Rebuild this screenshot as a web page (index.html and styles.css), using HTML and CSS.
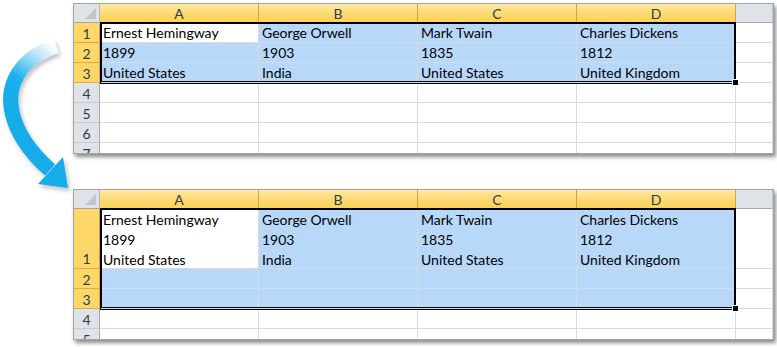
FILE: index.html
```html
<!DOCTYPE html>
<html>
<head>
<meta charset="utf-8">
<link rel="stylesheet" href="styles.css">
</head>
<body>
<div class="page">
  <svg class="arrow" width="80" height="200" viewBox="0 0 80 200" aria-hidden="true">
    <defs>
      <linearGradient id="shaft" gradientUnits="userSpaceOnUse" x1="52" y1="44" x2="14" y2="100">
        <stop offset="0" stop-color="#ffffff"/>
        <stop offset="0.25" stop-color="#bfe6f8"/>
        <stop offset="0.7" stop-color="#1cb0ec"/>
        <stop offset="1" stop-color="#14abe9"/>
      </linearGradient>
      <filter id="sh" x="-30%" y="-30%" width="160%" height="160%">
        <feDropShadow dx="2" dy="3" stdDeviation="2" flood-color="#000" flood-opacity="0.25"/>
      </filter>
    </defs>
    <g filter="url(#sh)">
      <path d="M56 46 C 20 58, 6 85, 12 112 C 17 135, 32 154, 50 170" fill="none" stroke="url(#shaft)" stroke-width="15"/>
      <polygon points="38,184 63,157 68,188" fill="#14abe9"/>
    </g>
  </svg>

  <div class="sheet sheet-top">
    <div class="grid">
      <div class="corner"><span class="tri"></span></div>
      <div class="ch sel">A</div>
      <div class="ch sel">B</div>
      <div class="ch sel">C</div>
      <div class="ch sel last">D</div>
      <div class="ch"></div>

      <div class="rh sel">1</div>
      <div class="c">Ernest Hemingway</div>
      <div class="c b">George Orwell</div>
      <div class="c b">Mark Twain</div>
      <div class="c b">Charles Dickens</div>
      <div class="c"></div>

      <div class="rh sel">2</div>
      <div class="c b">1899</div>
      <div class="c b">1903</div>
      <div class="c b">1835</div>
      <div class="c b">1812</div>
      <div class="c"></div>

      <div class="rh sel">3</div>
      <div class="c b">United States</div>
      <div class="c b">India</div>
      <div class="c b">United States</div>
      <div class="c b">United Kingdom</div>
      <div class="c"></div>

      <div class="rh">4</div><div class="c"></div><div class="c"></div><div class="c"></div><div class="c"></div><div class="c"></div>
      <div class="rh">5</div><div class="c"></div><div class="c"></div><div class="c"></div><div class="c"></div><div class="c"></div>
      <div class="rh">6</div><div class="c"></div><div class="c"></div><div class="c"></div><div class="c"></div><div class="c"></div>
      <div class="rh">7</div><div class="c"></div><div class="c"></div><div class="c"></div><div class="c"></div><div class="c"></div>
    </div>
    <div class="selection sel-top"><span class="handle"></span></div>
  </div>

  <div class="sheet sheet-bottom">
    <div class="grid">
      <div class="corner"><span class="tri"></span></div>
      <div class="ch sel">A</div>
      <div class="ch sel">B</div>
      <div class="ch sel">C</div>
      <div class="ch sel last">D</div>
      <div class="ch"></div>

      <div class="rh sel tall">1</div>
      <div class="c tall">Ernest Hemingway<br>1899<br>United States</div>
      <div class="c b tall">George Orwell<br>1903<br>India</div>
      <div class="c b tall">Mark Twain<br>1835<br>United States</div>
      <div class="c b tall">Charles Dickens<br>1812<br>United Kingdom</div>
      <div class="c tall"></div>

      <div class="rh sel">2</div>
      <div class="c b"></div><div class="c b"></div><div class="c b"></div><div class="c b"></div><div class="c"></div>

      <div class="rh sel">3</div>
      <div class="c b"></div><div class="c b"></div><div class="c b"></div><div class="c b"></div><div class="c"></div>

      <div class="rh">4</div><div class="c"></div><div class="c"></div><div class="c"></div><div class="c"></div><div class="c"></div>
      <div class="rh">5</div><div class="c"></div><div class="c"></div><div class="c"></div><div class="c"></div><div class="c"></div>
    </div>
    <div class="selection sel-bottom"><span class="handle"></span></div>
  </div>
</div>
</body>
</html>
```

FILE: styles.css
```css
* { box-sizing: border-box; }
html, body { margin: 0; padding: 0; background: #ffffff; }
body {
  width: 777px;
  height: 347px;
  overflow: hidden;
  font-family: Lato, "Liberation Sans", sans-serif;
}
.page {
  position: relative;
  padding: 3px 0 0 73px;
  display: flex;
  flex-direction: column;
  gap: 35px;
}
.arrow {
  position: absolute;
  left: 0;
  top: 0;
  z-index: 3;
}
.sheet {
  position: relative;
  width: 701px;
  border: 1px solid #a3a3a3;
  background: #fff;
  overflow: hidden;
  box-shadow: 2px 3px 4px rgba(0, 0, 0, 0.45);
}
.sheet-top { height: 151px; }
.sheet-bottom { height: 151px; }
.grid {
  display: grid;
  grid-template-columns: 26px 159px 159px 159px 159px 1fr;
  grid-auto-rows: 20px;
  grid-template-rows: 19px;
  font-size: 14px;
  color: #000;
}
.corner {
  position: relative;
  background: #dfe3e8;
  border-right: 1px solid #b3b8bf;
  border-bottom: 1px solid #a3a8ae;
}
.tri {
  position: absolute;
  right: 3px;
  bottom: 3px;
  width: 0;
  height: 0;
  border-left: 11px solid transparent;
  border-bottom: 11px solid #c2c6cc;
}
.ch {
  background: #dfe3e8;
  border-right: 1px solid #c3c7cd;
  border-bottom: 1px solid #a3a8ae;
  display: flex;
  align-items: center;
  justify-content: center;
  color: #2e3b4a;
  line-height: 1;
  padding-top: 1px;
}
.ch.sel {
  background: linear-gradient(#fdeaa6, #fcd86a 60%, #fbd25a);
  border-right: 1px solid #d9a23f;
  border-bottom: 1px solid #e09f2c;
}
.rh {
  background: #dfe3e8;
  border-right: 1px solid #a3a8ae;
  border-bottom: 1px solid #c7cbd1;
  display: flex;
  align-items: center;
  justify-content: center;
  color: #2e3b4a;
  padding-top: 1px;
}
.rh.sel {
  background: #fdd868;
  border-bottom: 1px solid #e5a940;
  border-right: 1px solid #d9a23f;
}
.rh.tall {
  align-items: flex-end;
  padding-bottom: 1px;
}
.c {
  border-right: 1px solid #dadada;
  border-bottom: 1px solid #dadada;
  padding: 1px 3px 0;
  display: flex;
  align-items: center;
  white-space: nowrap;
  overflow: hidden;
  line-height: 20px;
}
.c.b { background: #b8d8f9; border-right-color: #d2dbe6; border-bottom-color: #d2dbe6; }
.c.tall { align-items: flex-start; }
.tall { grid-row: span 3; }
.selection {
  position: absolute;
  left: 26px;
  width: 636px;
  border: 2px solid #000;
  border-bottom: 3px double #000;
  z-index: 2;
  pointer-events: none;
}
.sel-top { top: 18px; height: 62px; }
.sel-bottom { top: 18px; height: 102px; }
.handle {
  position: absolute;
  right: -5px;
  bottom: -5px;
  width: 7px;
  height: 7px;
  background: #000;
  border: 1px solid #fff;
}
```
